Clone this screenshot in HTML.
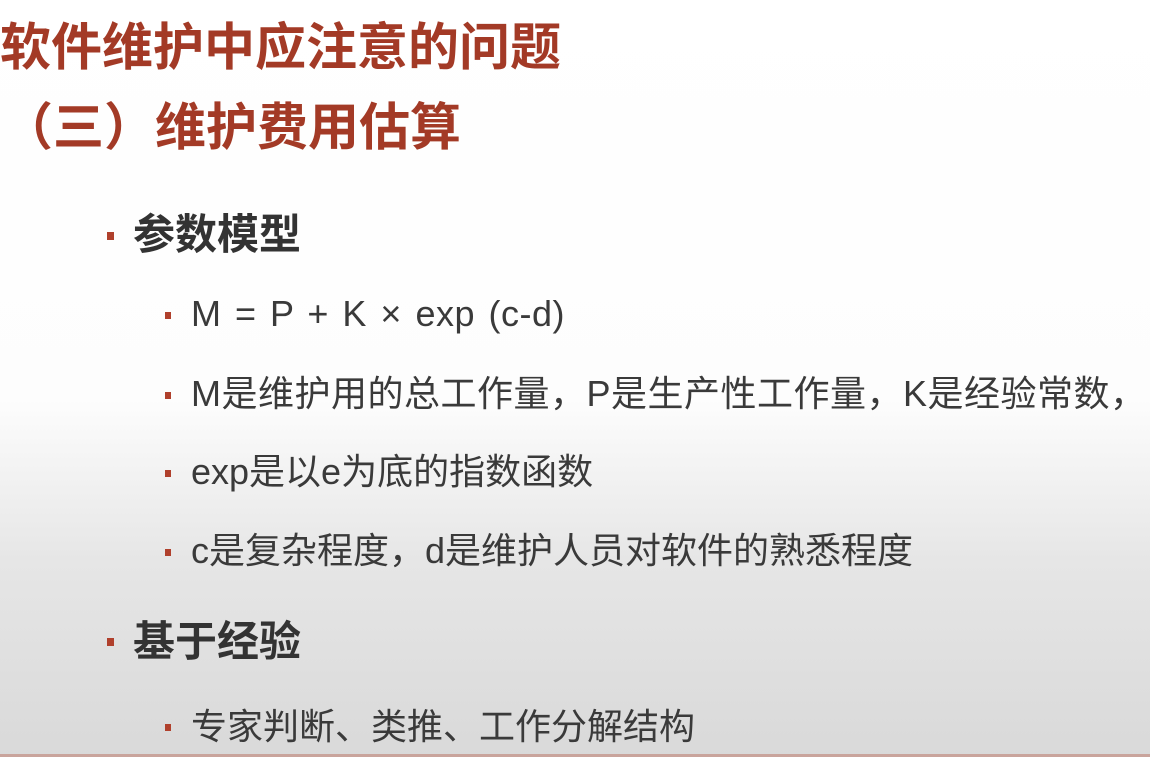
<!DOCTYPE html>
<html><head><meta charset="utf-8"><style>
body{margin:0;width:1150px;height:757px;overflow:hidden;position:relative;
background:linear-gradient(#fff 0px,#fdfdfd 400px,#e6e6e6 560px,#d9d9d9 757px);
font-family:"Liberation Sans","Noto Sans CJK SC",sans-serif;}
.t{position:absolute;left:0;color:#a33a26;font-weight:bold;font-size:51px;line-height:1;white-space:nowrap;}
.l1{position:absolute;left:133px;color:#333;font-weight:bold;font-size:42px;line-height:1;white-space:nowrap;}
.l2{position:absolute;left:191px;color:#3a3a3a;font-size:36px;line-height:1;white-space:nowrap;}
.b1{position:absolute;left:107px;width:7px;height:8px;background:#b0402c;}
.b2{position:absolute;left:165px;width:6px;height:7px;background:#b0402c;}
.bar{position:absolute;left:0;top:754px;width:1150px;height:3px;background:#c9a49c;}
</style></head><body>
<div class="t" style="top:22px;left:0">软件维护中应注意的问题</div>
<div class="t" style="top:102px;left:2px">（三）维护费用估算</div>
<div class="b1" style="top:232px"></div><div class="l1" style="top:214px">参数模型</div>
<div class="b2" style="top:312px"></div><div class="l2" style="top:296px;word-spacing:3px;letter-spacing:0.5px">M = P + K × exp (c-d)</div>
<div class="b2" style="top:392px"></div><div class="l2" style="top:376px;letter-spacing:0.5px">M是维护用的总工作量，P是生产性工作量，K是经验常数，</div>
<div class="b2" style="top:470px"></div><div class="l2" style="top:454px">exp是以e为底的指数函数</div>
<div class="b2" style="top:549px"></div><div class="l2" style="top:533px">c是复杂程度，d是维护人员对软件的熟悉程度</div>
<div class="b1" style="top:638px"></div><div class="l1" style="top:621px">基于经验</div>
<div class="b2" style="top:724px"></div><div class="l2" style="top:709px">专家判断、类推、工作分解结构</div>
<div class="bar"></div>
</body></html>
